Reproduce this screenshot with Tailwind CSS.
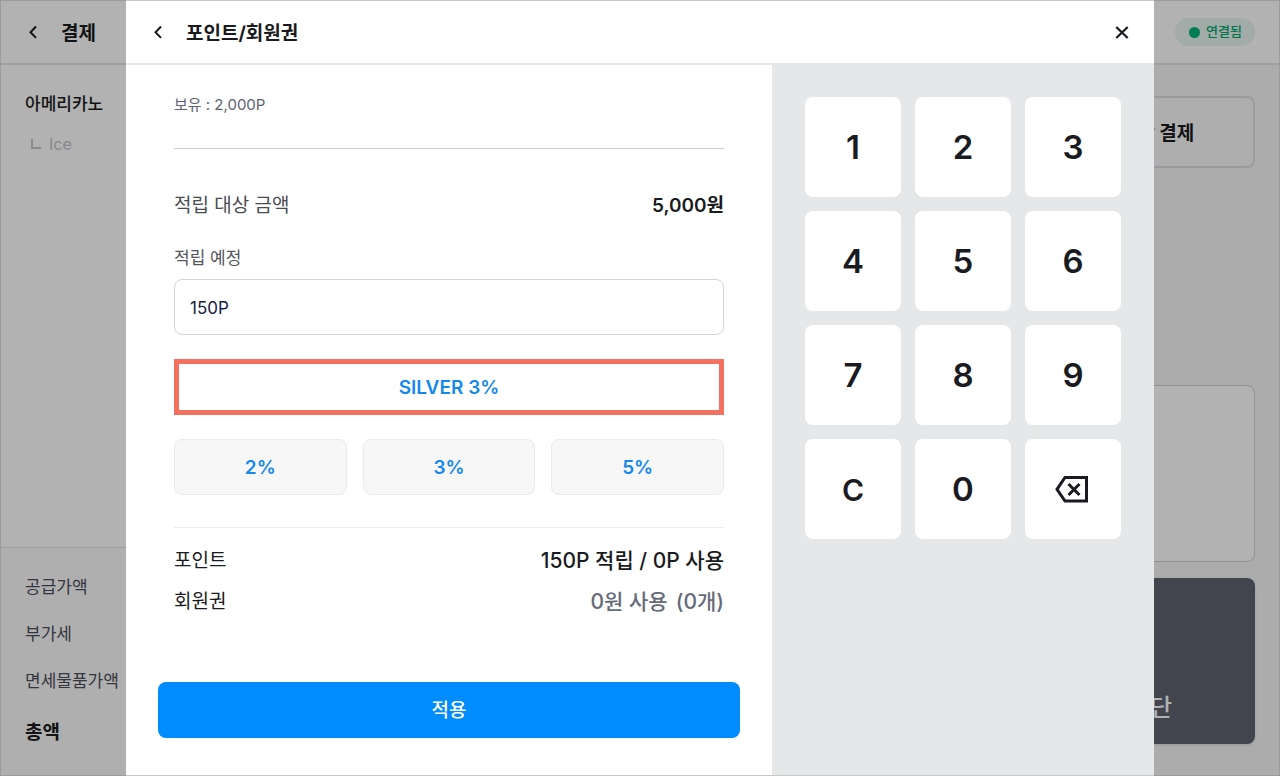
<!DOCTYPE html>
<html lang="ko">
<head>
<meta charset="utf-8">
<meta name="viewport" content="width=device-width, initial-scale=1">
<title>포인트/회원권</title>
<script src="https://cdn.jsdelivr.net/npm/@tailwindcss/browser@4"></script>
</head>
<body class="min-h-screen bg-white font-['Inter','Noto_Sans_CJK_KR',sans-serif] text-[#1a1b21]">

<!-- Payment screen under the dialog -->
<div class="flex min-h-screen flex-col border border-[#dedede]" inert>
  <header class="flex h-16 items-center justify-between border-b-2 border-[#e3e4e8] pr-6 pl-5">
    <div class="flex items-center gap-4">
      <button class="flex size-6 items-center justify-center" aria-label="뒤로">
        <svg class="size-6" viewBox="0 0 24 24" fill="none" stroke="currentColor" stroke-width="2"><path d="M15 6.500 9.500 12.200l5.500 5.700"/></svg>
      </button>
      <h1 class="pt-1 text-[19px] leading-7 font-bold">결제</h1>
    </div>
    <p class="flex h-7 items-center gap-1.5 rounded-full bg-[#e9f5f0] pr-[13px] pl-3.5 text-[13px] font-medium text-[#00a66c]">
      <span class="size-[11px] rounded-full bg-[#00b377]"></span>연결됨
    </p>
  </header>
  <div class="flex grow">
    <aside class="flex w-100 flex-col justify-between bg-white">
      <div class="px-6 pt-[23px]">
        <p class="text-[17px] leading-8 font-medium">아메리카노</p>
        <p class="mt-2 flex items-center gap-2 pl-1.5 leading-8 text-[#c4c5c9]">
          <svg class="size-2.5" viewBox="0 0 10 10" fill="none" stroke="currentColor" stroke-width="2"><path d="M1 0v9h9"/></svg>Ice
        </p>
      </div>
      <div class="border-t border-[#e3e4e8] bg-[#fbfbfb] px-6 pt-4 pb-[19px] text-[17px] text-[#4a4e5c]">
        <p class="leading-[47px]">공급가액</p>
        <p class="leading-[47px]">부가세</p>
        <p class="leading-[47px]">면세물품가액</p>
        <p class="pt-1 text-[19px] leading-[47px] font-bold text-[#1a1b21]">총액</p>
      </div>
    </aside>
    <main class="flex grow flex-col items-end bg-[#f6f6f6] pt-[31px] pr-6">
      <button class="h-[72px] w-49 rounded-lg border-2 border-[#dddee3] bg-[#fafafa] pt-1 text-[19px] font-bold">복합 결제</button>
      <div class="mt-[217px] h-[177px] w-80 rounded-lg border border-[#cfd0d2] bg-white"></div>
      <button class="mt-4 flex h-[166px] w-80 items-end justify-end rounded-lg bg-[#5f6370] pr-[83px] pb-5 text-2xl font-medium text-white shadow-sm">중단</button>
    </main>
  </div>
</div>

<!-- Points and membership dialog -->
<div class="absolute inset-0 flex justify-center bg-black/30">
  <section role="dialog" aria-modal="true" aria-labelledby="dialog-title" class="flex min-h-full w-full max-w-[1028px] flex-col border-y border-[#c8c8c8] bg-white">
    <header class="flex h-16 shrink-0 items-center gap-4 border-b-2 border-[#e6e7e9] px-5">
      <button class="flex size-6 items-center justify-center" aria-label="뒤로">
        <svg class="size-6" viewBox="0 0 24 24" fill="none" stroke="currentColor" stroke-width="2"><path d="M15 6.500 9.500 12.200l5.500 5.700"/></svg>
      </button>
      <h2 id="dialog-title" class="grow pt-1 text-[19px] leading-7 font-bold">포인트/회원권</h2>
      <button class="flex size-6 items-center justify-center" aria-label="닫기">
        <svg class="size-6" viewBox="0 0 24 24" fill="none" stroke="currentColor" stroke-width="2.300"><path d="m6.300 7 11.400 11M17.700 7 6.300 18"/></svg>
      </button>
    </header>

    <div class="flex grow">
      <form class="flex grow flex-col px-8 pt-7 pb-[37px]">
        <div class="px-4">
          <p class="border-b border-[#cccdd0] pb-[31px] text-[15px] leading-6 text-[#5d6272]">보유 : 2,000P</p>

          <p class="mt-[41px] flex items-center justify-between leading-8">
            <span class="text-[19px] text-[#4a4b50]">적립 대상 금액</span>
            <strong class="text-[19px] font-semibold">5,000원</strong>
          </p>

          <label for="points" class="mt-6 block text-[17px] leading-6 text-[#55565b]">적립 예정</label>
          <input id="points" type="text" value="150P" class="mt-[9px] block h-14 w-full rounded-lg border border-[#d4d5d7] px-[15px] pt-0.5 text-[17px] text-[#16213f]">

          <button type="button" class="mt-6 block h-14 w-full border-5 border-[#f4705f] pt-0.5 text-[19px] font-semibold text-[#1389ee]">SILVER 3%</button>

          <div class="mt-6 grid grid-cols-3 gap-4 text-[19px] text-[#1389ee]">
            <button type="button" class="h-14 rounded-lg border border-[#e9eaec] bg-[#f7f7f8] pt-0.5 font-semibold">2%</button>
            <button type="button" class="h-14 rounded-lg border border-[#e9eaec] bg-[#f7f7f8] pt-0.5 font-semibold">3%</button>
            <button type="button" class="h-14 rounded-lg border border-[#e9eaec] bg-[#f7f7f8] pt-0.5 font-semibold">5%</button>
          </div>

          <dl class="mt-8 border-t border-[#e9eaec] pt-3 leading-[41px]">
            <div class="flex justify-between">
              <dt class="text-[19px]">포인트</dt>
              <dd class="text-[21px] font-medium">150P 적립 / 0P 사용</dd>
            </div>
            <div class="flex justify-between">
              <dt class="text-[19px]">회원권</dt>
              <dd class="flex gap-2 text-[21px] font-medium text-[#666b79]"><span>0원 사용</span><span>(0개)</span></dd>
            </div>
          </dl>
        </div>
        <button type="submit" class="mt-auto h-14 shrink-0 rounded-lg bg-[#008cff] pt-0.5 text-[19px] font-medium text-white">적용</button>
      </form>

      <div class="w-[382px] shrink-0 bg-[#e6e7e9] px-[33px] pt-8">
        <div class="grid auto-rows-[100px] grid-cols-3 gap-3.5 text-[33px] font-semibold">
          <button class="rounded-lg bg-white pt-0.5">1</button>
          <button class="rounded-lg bg-white pt-0.5">2</button>
          <button class="rounded-lg bg-white pt-0.5">3</button>
          <button class="rounded-lg bg-white pt-0.5">4</button>
          <button class="rounded-lg bg-white pt-0.5">5</button>
          <button class="rounded-lg bg-white pt-0.5">6</button>
          <button class="rounded-lg bg-white pt-0.5">7</button>
          <button class="rounded-lg bg-white pt-0.5">8</button>
          <button class="rounded-lg bg-white pt-0.5">9</button>
          <button class="rounded-lg bg-white pt-0.5 text-[30px]">C</button>
          <button class="rounded-lg bg-white pt-0.5">0</button>
          <button class="flex items-center justify-center rounded-lg bg-white" aria-label="지우기">
            <svg class="h-7 w-9" viewBox="0 0 36 28" fill="none" stroke="currentColor" stroke-width="3"><path d="M10 2.500h21.500v23.500H10L2 14.300z"/><path d="m13.500 9 11 11M24.500 9l-11 11"/></svg>
          </button>
        </div>
      </div>
    </div>
  </section>
</div>
</body>
</html>
